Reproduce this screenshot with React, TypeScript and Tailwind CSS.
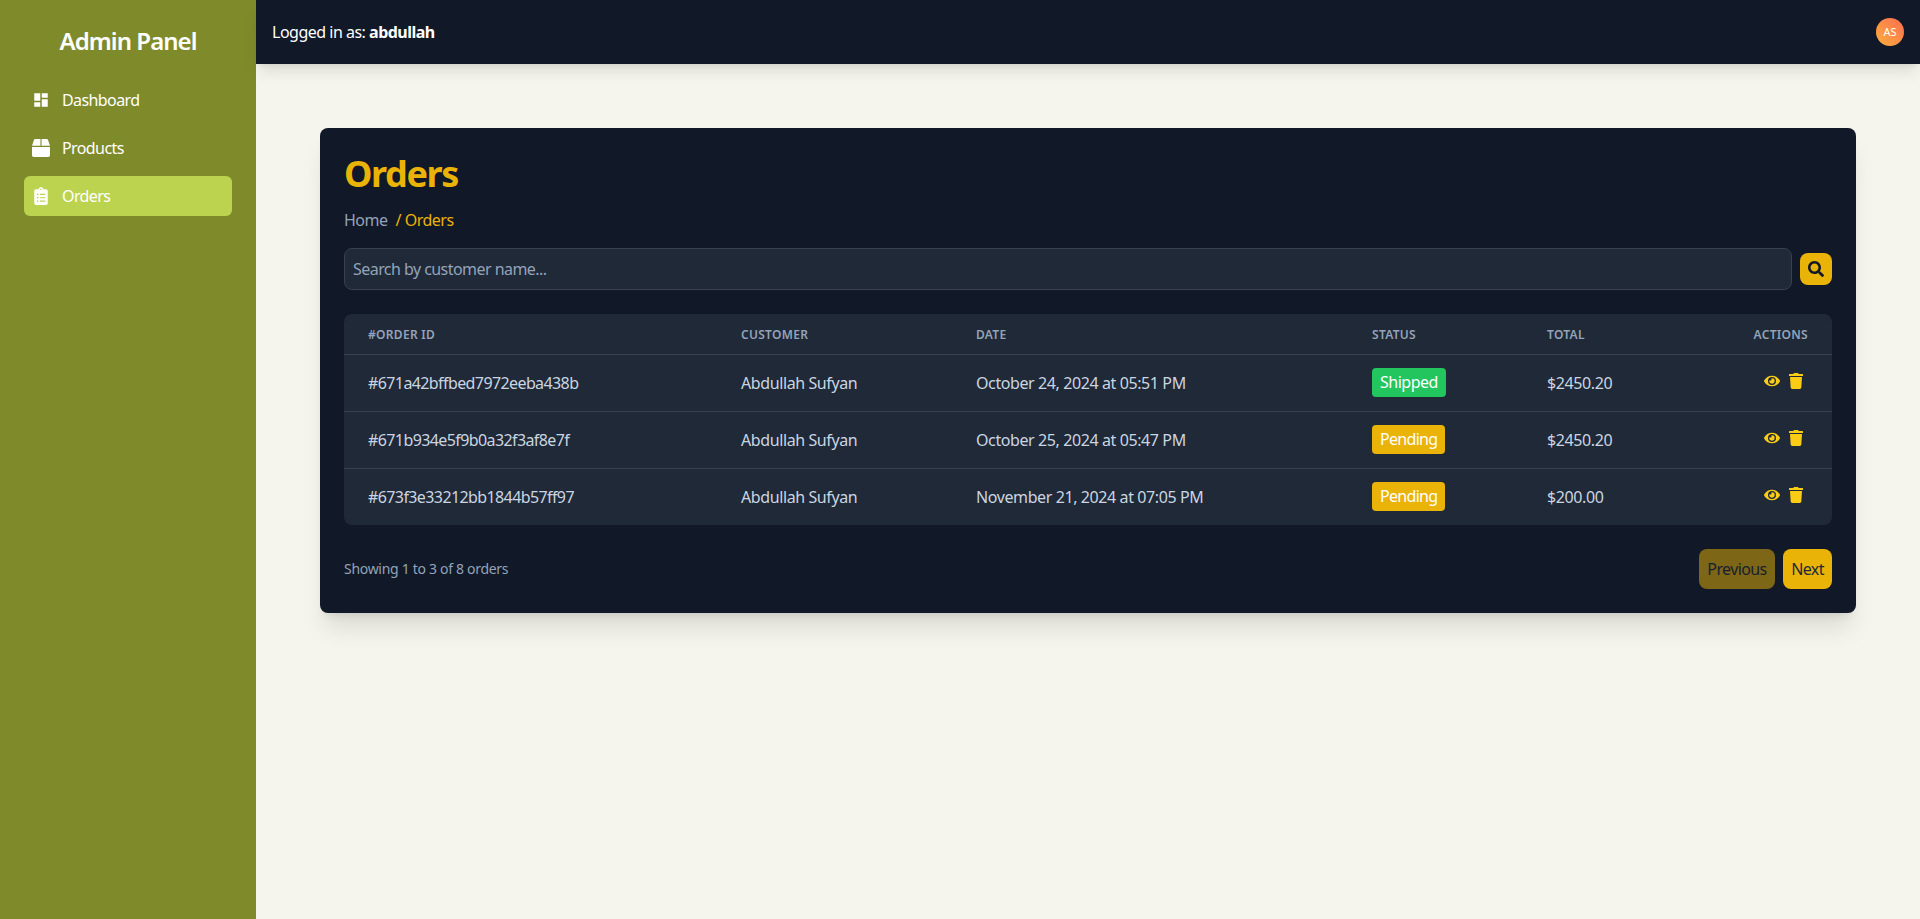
import React from "react";
import { FaBox, FaClipboardList, FaEye, FaSearch, FaTrash } from "react-icons/fa";
import { MdDashboard } from "react-icons/md";

const orders = [
  { id: "#671a42bffbed7972eeba438b", customer: "Abdullah Sufyan", date: "October 24, 2024 at 05:51 PM", status: "Shipped", total: "$2450.20" },
  { id: "#671b934e5f9b0a32f3af8e7f", customer: "Abdullah Sufyan", date: "October 25, 2024 at 05:47 PM", status: "Pending", total: "$2450.20" },
  { id: "#673f3e33212bb1844b57ff97", customer: "Abdullah Sufyan", date: "November 21, 2024 at 07:05 PM", status: "Pending", total: "$200.00" },
];

const App = () => {
  return (
    <div className="flex min-h-screen bg-[#f5f5ed] font-['Noto_Sans',sans-serif] text-white">
      {/* Sidebar */}
      <aside className="w-[256px] shrink-0 bg-[#7f8b2b] px-6 pt-6">
        <h2 className="mb-[22px] text-center text-2xl leading-[34px] font-semibold tracking-[-0.95px]">Admin Panel</h2>
        <nav className="flex flex-col gap-2">
          <a className="flex h-10 items-center gap-3 rounded-md px-2 tracking-[-0.6px]">
            <MdDashboard size={18} />
            Dashboard
          </a>
          <a className="flex h-10 items-center gap-3 rounded-md px-2 tracking-[-0.6px]">
            <FaBox size={18} />
            Products
          </a>
          <a className="flex h-10 items-center gap-3 rounded-md bg-[#bcd34f] px-2 tracking-[-0.6px]">
            <FaClipboardList size={18} />
            Orders
          </a>
        </nav>
      </aside>

      <div className="flex min-w-0 flex-1 flex-col">
        {/* Topbar */}
        <header className="flex h-16 items-center justify-between bg-[#111827] pr-4 pl-4 shadow-lg">
          <p className="tracking-[-0.5px]">
            Logged in as: <span className="font-bold">abdullah</span>
          </p>
          <div className="flex h-7 w-7 items-center justify-center rounded-full bg-gradient-to-tr from-[#fbae3c] to-[#fb6b4f] text-[11px]">
            AS
          </div>
        </header>

        <main className="p-16">
          <div className="rounded-lg bg-[#111827] p-6 shadow-xl">
            <h1 className="mb-3 text-4xl leading-[44px] font-bold tracking-[-1.4px] text-[#eab308]">Orders</h1>
            <div className="mb-4 flex leading-6 tracking-[-0.5px]">
              <span className="mr-2 text-[#94a3b8]">Home</span>
              <span className="text-[#eab308]">/ Orders</span>
            </div>

            {/* Search */}
            <div className="mb-6 flex items-center gap-2">
              <input
                className="h-[42px] flex-1 rounded-lg border border-[#374151] bg-[#1f2937] px-2 tracking-[-0.55px] text-white outline-none placeholder:text-[#94a3b8]"
                placeholder="Search by customer name..."
              />
              <button className="flex h-8 w-8 items-center justify-center rounded-lg bg-[#eab308] text-[#111827]">
                <FaSearch size={16} />
              </button>
            </div>

            {/* Table */}
            <div className="overflow-hidden rounded-lg bg-[#1f2937]">
              <table className="w-full table-fixed text-left">
                <thead>
                  <tr className="h-10 text-xs font-semibold tracking-[0.3px] text-[#94a3b8] uppercase">
                    <th className="w-[373px] px-6 pt-0.5 font-semibold">#Order ID</th>
                    <th className="w-[235px] px-6 pt-0.5 font-semibold">Customer</th>
                    <th className="w-[396px] px-6 pt-0.5 font-semibold">Date</th>
                    <th className="w-[175px] px-6 pt-0.5 font-semibold">Status</th>
                    <th className="w-[160px] px-6 pt-0.5 font-semibold">Total</th>
                    <th className="px-6 pt-0.5 text-right font-semibold">Actions</th>
                  </tr>
                </thead>
                <tbody className="tracking-[-0.4px] text-[#cbd5e1]">
                  {orders.map((order) => (
                    <tr key={order.id} className="h-[57px] border-t border-[#374151]">
                      <td className="px-6 tracking-[-0.6px]">{order.id}</td>
                      <td className="px-6">{order.customer}</td>
                      <td className="px-6">{order.date}</td>
                      <td className="px-6">
                        <span
                          className={
                            order.status === "Shipped"
                              ? "inline-block rounded bg-[#22c55e] px-2 py-0.5 leading-[25px] tracking-[-0.5px] text-white"
                              : "inline-block rounded bg-[#eab308] px-2 py-0.5 leading-[25px] tracking-[-0.7px] text-white"
                          }
                        >
                          {order.status}
                        </span>
                      </td>
                      <td className="px-6">{order.total}</td>
                      <td className="px-6">
                        <div className="flex items-center justify-end gap-2 pr-1 pb-1 text-[#facc15]">
                          <FaEye size={16} />
                          <FaTrash size={16} />
                        </div>
                      </td>
                    </tr>
                  ))}
                </tbody>
              </table>
            </div>

            {/* Pagination */}
            <div className="mt-6 flex items-center justify-between">
              <span className="text-sm tracking-[-0.3px] text-[#94a3b8]">Showing 1 to 3 of 8 orders</span>
              <div className="flex gap-2 tracking-[-0.6px] text-[#1f2937]">
                <button className="h-10 w-[76px] rounded-lg bg-[#eab308] opacity-50">Previous</button>
                <button className="h-10 w-[49px] rounded-lg bg-[#eab308]">Next</button>
              </div>
            </div>
          </div>
        </main>
      </div>
    </div>
  );
};

export default App;
